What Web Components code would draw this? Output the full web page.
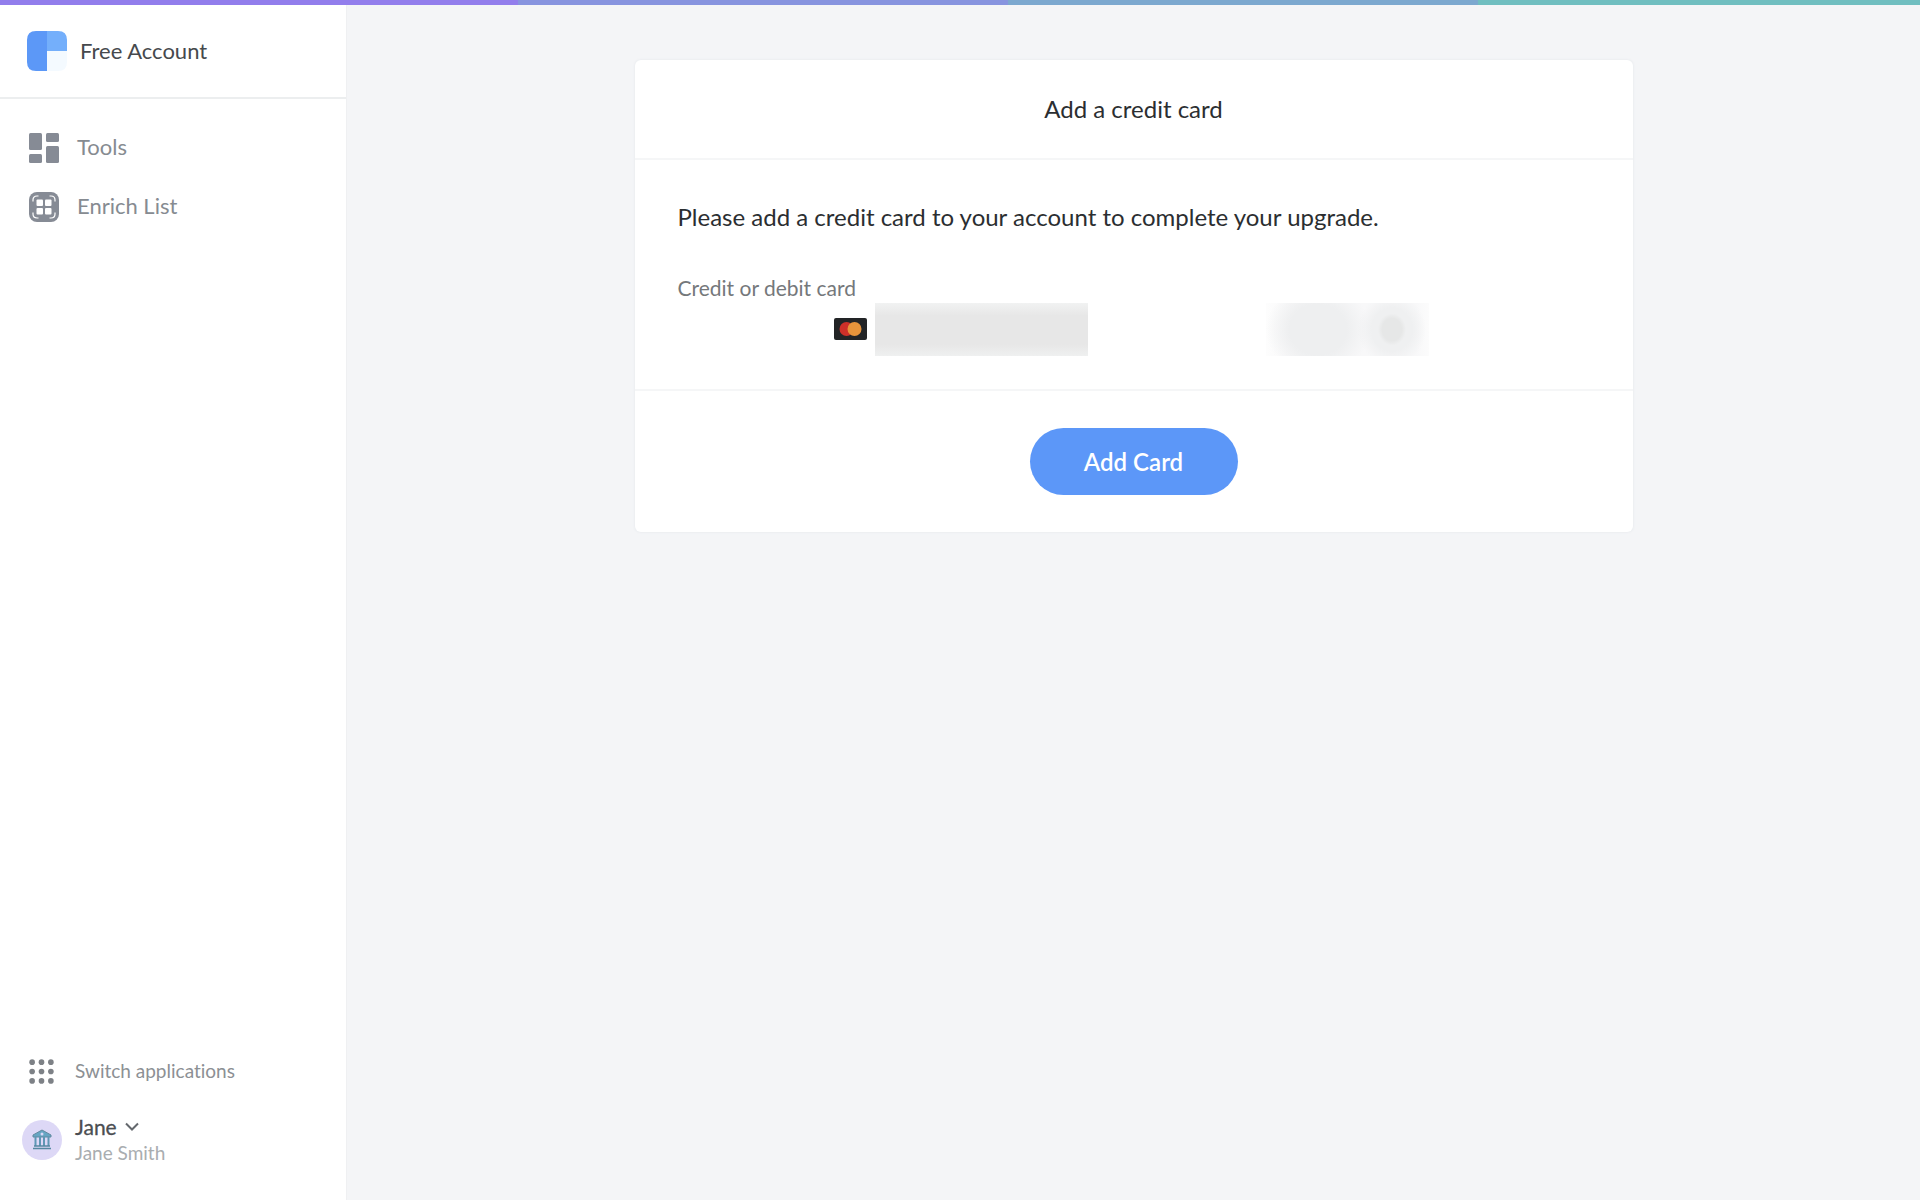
<!DOCTYPE html>
<html lang="en">
<head>
<meta charset="utf-8">
<meta name="viewport" content="width=device-width, initial-scale=1">
<title>Add a credit card</title>
<style>
  body {
    margin: 0;
    font-family: Lato, "Liberation Sans", sans-serif;
    font-variant-ligatures: none;
    color: #2b2e31;
    background: #f4f5f7;
  }
</style>
</head>
<body>
<app-shell>
  <side-bar slot="sidebar" account="Free Account">
    <nav-item icon="tools" href="#tools">Tools</nav-item>
    <nav-item icon="enrich" href="#enrich">Enrich List</nav-item>
    <app-switcher slot="footer">Switch applications</app-switcher>
    <user-menu slot="footer" name="Jane" full-name="Jane Smith"></user-menu>
  </side-bar>
  <dialog-card>
    <span slot="title">Add a credit card</span>
    <span slot="message">Please add a credit card to your account to complete your upgrade.</span>
    <card-field label="Credit or debit card"></card-field>
    <pill-button slot="action">Add Card</pill-button>
  </dialog-card>
</app-shell>

<script>
const icons = {
  tools: /*html*/ `
    <svg width="30" height="30" viewBox="0 0 30 30" fill="#868b95" aria-hidden="true">
      <rect width="13" height="17" rx="1.5"/>
      <rect x="17" width="13" height="9" rx="1.5"/>
      <rect y="21" width="13" height="9" rx="1.5"/>
      <rect x="17" y="13" width="13" height="17" rx="1.5"/>
    </svg>`,
  enrich: /*html*/ `
    <svg width="30" height="30" viewBox="0 0 30 30" aria-hidden="true">
      <rect width="30" height="30" rx="8" fill="#868b95"/>
      <g fill="#fff">
        <rect x="7.5" y="7.5" width="6.5" height="6.5" rx="1"/>
        <rect x="16" y="7.5" width="6.5" height="6.5" rx="1"/>
        <rect x="7.5" y="16" width="6.5" height="6.5" rx="1"/>
        <rect x="16" y="16" width="6.5" height="6.5" rx="1"/>
      </g>
      <path d="M4 9.500V8Q4 4 8 4H9.500M20.500 4H22Q26 4 26 8V9.500M26 20.500V22Q26 26 22 26H20.500M9.500 26H8Q4 26 4 22V20.500" fill="none" stroke="#fff" stroke-width="1.200"/>
    </svg>`,
};

class BaseElement extends HTMLElement {
  connectedCallback() {
    if (this.shadowRoot) return;
    this.attachShadow({ mode: "open" }).innerHTML = this.render();
  }
}

class AppShell extends BaseElement {
  render() {
    return /*html*/ `
      <style>
        :host {
          display: flex;
          flex-direction: column;
          min-height: 100vh;
        }

        .stripe {
          height: 5px;
          background: linear-gradient(to right,
            #927eec 27%, #8794df 27% 52.500%, #7ca8cf 52.500% 77%, #70bec0 77%);
        }

        .content {
          display: flex;
          flex: 1;
        }

        main {
          flex: 1;
          padding: 55px 24px;
        }
      </style>
      <div class="stripe"></div>
      <div class="content">
        <slot name="sidebar"></slot>
        <main><slot></slot></main>
      </div>
    `;
  }
}

class SideBar extends BaseElement {
  render() {
    return /*html*/ `
      <style>
        :host {
          display: flex;
          flex-direction: column;
          box-sizing: border-box;
          width: 347px;
          background: #fff;
          border-right: 1px solid #eff0f2;
        }

        header {
          display: flex;
          align-items: center;
          gap: 13px;
          height: 92px;
          padding-left: 27px;
          border-bottom: 2px solid #eceeef;
          font-size: 22px;
          color: #46494d;
        }

        header span {
          padding-bottom: 2px;
        }

        nav {
          flex: 1;
          padding-top: 19px;
        }

        footer {
          padding-bottom: 34px;
        }
      </style>
      <header>
        <svg width="40" height="40" viewBox="0 0 40 40" aria-hidden="true">
          <path d="M20 0v40H9Q0 40 0 31V9Q0 0 9 0z" fill="#5c98f7"/>
          <path d="M20 0h11q9 0 9 9v11H20z" fill="#74affb"/>
          <path d="M20 20h20v11q0 9-9 9H20z" fill="#f4faff"/>
        </svg>
        <span>${this.getAttribute("account")}</span>
      </header>
      <nav><slot></slot></nav>
      <footer><slot name="footer"></slot></footer>
    `;
  }
}

class NavItem extends BaseElement {
  render() {
    return /*html*/ `
      <style>
        :host {
          display: block;
        }

        a {
          display: flex;
          align-items: center;
          gap: 18px;
          height: 59px;
          padding-left: 29px;
          font-size: 22px;
          color: #868b91;
          text-decoration: none;
        }

        span {
          padding-bottom: 2px;
        }
      </style>
      <a href="${this.getAttribute("href")}">
        ${icons[this.getAttribute("icon")]}
        <span><slot></slot></span>
      </a>
    `;
  }
}

class AppSwitcher extends BaseElement {
  render() {
    const dots = [3, 12, 21]
      .map((y) => [3, 12, 21].map((x) => `<circle cx="${x}" cy="${y}" r="2.700"/>`).join(""))
      .join("");

    return /*html*/ `
      <style>
        :host {
          display: block;
        }

        button {
          display: flex;
          align-items: center;
          gap: 21px;
          width: 100%;
          height: 40px;
          margin-bottom: 23px;
          padding: 0 0 0 29px;
          border: 0;
          background: none;
          font: inherit;
          font-size: 19px;
          color: #8c9094;
        }

        span {
          padding-bottom: 2px;
        }
      </style>
      <button type="button">
        <svg width="25" height="25" viewBox="0 0 24 24" fill="#7d8186" aria-hidden="true">${dots}</svg>
        <span><slot></slot></span>
      </button>
    `;
  }
}

class UserMenu extends BaseElement {
  render() {
    return /*html*/ `
      <style>
        :host {
          display: block;
        }

        button {
          display: flex;
          align-items: center;
          gap: 13px;
          width: 100%;
          padding: 0 0 0 22px;
          border: 0;
          background: none;
          font: inherit;
          font-size: 19px;
          line-height: 26px;
          text-align: left;
        }

        .name {
          display: flex;
          align-items: center;
          gap: 8px;
          color: #4b4e52;
          font-size: 21px;
          -webkit-text-stroke: 0.3px;
        }

        .full-name {
          color: #a9adb0;
        }
      </style>
      <button type="button" aria-haspopup="menu">
        <svg width="40" height="40" viewBox="0 0 40 40" aria-hidden="true">
          <circle cx="20" cy="20" r="20" fill="#ddd8f6"/>
          <path d="M11 17v-2l9-5 9 5v2z" fill="#66a6c3" stroke="#63899f"/>
          <circle cx="20" cy="14" r="1.500" fill="#ddd8f6"/>
          <path d="M13.500 17v9M18 17v9M22 17v9M26.500 17v9" stroke="#5f97b5" stroke-width="2"/>
          <path d="M11 28.500h18M12 26h16" stroke="#5688a1" stroke-width="1.500"/>
        </svg>
        <span>
          <span class="name">
            ${this.getAttribute("name")}
            <svg width="14" height="10" viewBox="0 0 14 10" fill="none" stroke="#64686d" stroke-width="2" aria-hidden="true">
              <path d="M1 1.500l6 6 6-6"/>
            </svg>
          </span>
          <span class="full-name">${this.getAttribute("full-name")}</span>
        </span>
      </button>
    `;
  }
}

class DialogCard extends BaseElement {
  render() {
    return /*html*/ `
      <style>
        :host {
          display: block;
          box-sizing: border-box;
          max-width: 998px;
          margin: 0 auto;
          background: #fff;
          border-radius: 6px;
          box-shadow: 0 0 2px 1px #eceef1;
        }

        header {
          display: flex;
          align-items: center;
          justify-content: center;
          height: 98px;
          border-bottom: 2px solid #f5f6f7;
        }

        h1,
        p {
          margin: 0;
          font-size: 24px;
          font-weight: 400;
          line-height: 32px;
        }

        .body {
          padding: 41px 43px 32px;
          border-bottom: 2px solid #f5f6f7;
        }

        p {
          margin-bottom: 42px;
        }

        footer {
          display: flex;
          justify-content: center;
          padding: 37px;
        }
      </style>
      <header><h1><slot name="title"></slot></h1></header>
      <div class="body">
        <p><slot name="message"></slot></p>
        <slot></slot>
      </div>
      <footer><slot name="action"></slot></footer>
    `;
  }
}

class CardField extends BaseElement {
  render() {
    return /*html*/ `
      <style>
        :host {
          display: block;
        }

        label {
          display: block;
          font-size: 21px;
          line-height: 26px;
          color: #75787b;
        }

        .row {
          display: flex;
          align-items: center;
          height: 56px;
          padding: 0 161px 0 156px;
        }

        input {
          box-sizing: border-box;
          min-width: 0;
          height: 53px;
          padding: 0;
          border: 0;
          font: inherit;
        }

        .number {
          width: 213px;
          margin: 0 auto 0 8px;
          background: linear-gradient(#f1f2f2, #e7e7e7 24%, #e7e7e7 78%, #eff0f0);
        }

        .expiry {
          width: 163px;
          background:
            radial-gradient(ellipse 14px 16px at 126px 50%, #e6e7e7 70%, transparent),
            radial-gradient(ellipse 34px 36px at 126px 50%, #eff0f1 60%, transparent),
            radial-gradient(ellipse 52px 46px at 52px 50%, #eeeff0 55%, transparent),
            linear-gradient(to right, #fdfdfd, #f8f8f9 20%, #f8f8f9 92%, #fcfcfc);
        }
      </style>
      <label for="number">${this.getAttribute("label")}</label>
      <div class="row">
        <svg width="33" height="22" viewBox="0 0 33 22" aria-hidden="true">
          <rect width="33" height="22" rx="2" fill="#222426"/>
          <circle cx="12.500" cy="11" r="7" fill="#cd3029"/>
          <circle cx="20.500" cy="11" r="7" fill="#e6943b"/>
        </svg>
        <input class="number" id="number" type="text" inputmode="numeric">
        <input class="expiry" type="text" inputmode="numeric" aria-label="Expiry and security code">
      </div>
    `;
  }
}

class PillButton extends BaseElement {
  render() {
    return /*html*/ `
      <style>
        :host {
          display: block;
        }

        button {
          width: 208px;
          height: 67px;
          border: 0;
          border-radius: 34px;
          background: #5c97f8;
          color: #fff;
          font: inherit;
          font-size: 24px;
          font-weight: 600;
        }
      </style>
      <button type="button"><slot></slot></button>
    `;
  }
}

customElements.define("app-shell", AppShell);
customElements.define("side-bar", SideBar);
customElements.define("nav-item", NavItem);
customElements.define("app-switcher", AppSwitcher);
customElements.define("user-menu", UserMenu);
customElements.define("dialog-card", DialogCard);
customElements.define("card-field", CardField);
customElements.define("pill-button", PillButton);
</script>
</body>
</html>
